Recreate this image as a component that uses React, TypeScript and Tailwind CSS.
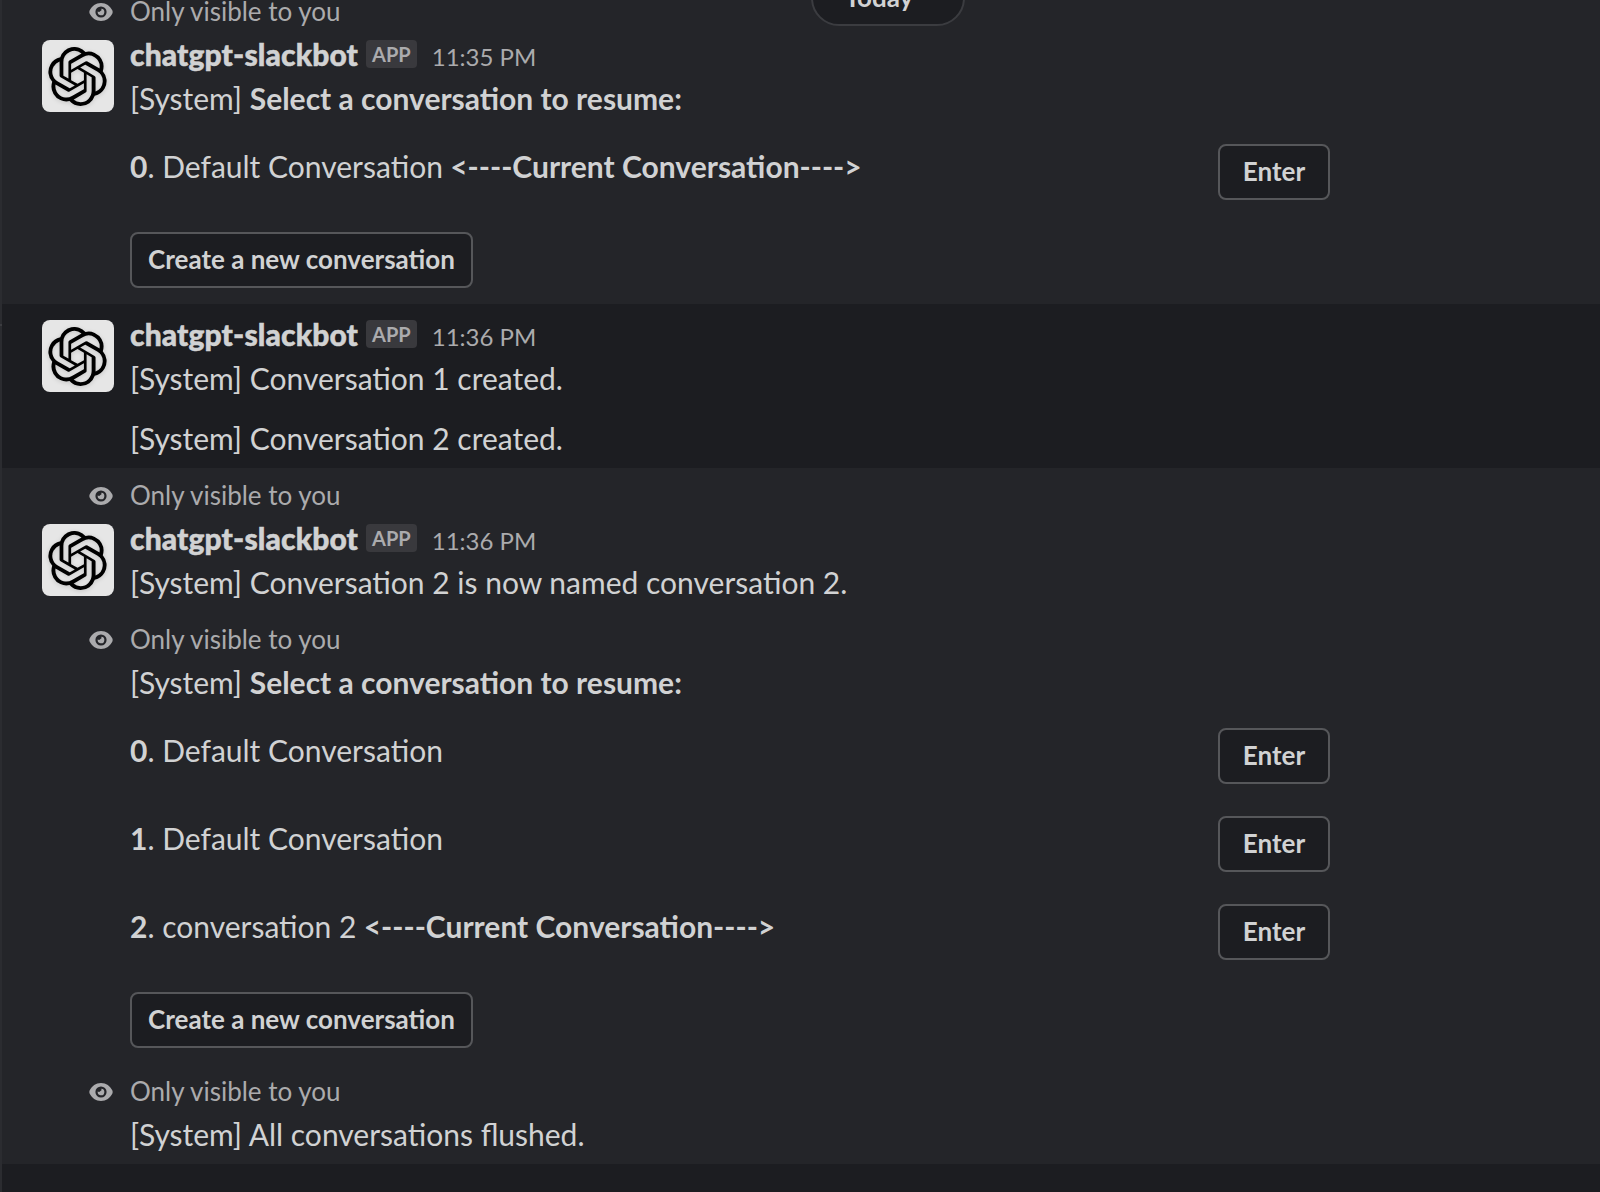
import type { ReactNode } from "react";
import { SiOpenai } from "react-icons/si";

function EyeIcon() {
  return (
    <svg viewBox="0 0 24 20" className="h-5 w-6" aria-hidden="true">
      <path
        fill="#ababad"
        fillRule="evenodd"
        d="M12 .9C17.200 .9 21.200 4 23.400 8.400Q24 10 23.400 11.600C21.200 16 17.200 19.100 12 19.100S2.800 16 .6 11.600Q0 10 .6 8.400C2.800 4 6.800 .9 12 .9ZM12 4.400a5.600 5.600 0 1 0 0 11.200a5.600 5.600 0 0 0 0-11.200Z"
      />
      <path fill="#ababad" d="M12.300 6.700A3.300 3.300 0 1 1 8.800 9.300A1.500 1.500 0 0 0 11.400 9.100A1.700 1.700 0 0 0 12.300 6.700Z" />
    </svg>
  );
}

function OnlyVisible() {
  return (
    <div className="flex h-10 items-center text-[26px] leading-10 text-[#ababad]">
      <div className="flex w-[88px] justify-end pr-[17px]">
        <EyeIcon />
      </div>
      <span className="pb-0.5">Only visible to you</span>
    </div>
  );
}

function Avatar() {
  return (
    <div className="flex size-[72px] shrink-0 items-center justify-center rounded-lg bg-[#e6e6e6] pr-0.5">
      <SiOpenai className="size-[59px] text-black drop-shadow-sm" />
    </div>
  );
}

function Header({ time }: { time: string }) {
  return (
    <div className="flex h-11 items-center">
      <span className="font-black leading-[44px] tracking-[0.13px] [-webkit-text-stroke:0.5px_#d1d2d3]">
        chatgpt-slackbot
      </span>
      <span className="-mt-[1px] ml-2 flex h-7 items-center rounded-[4px] bg-[#39393d] px-[6px] text-[20px] font-bold text-[#ababad]">
        APP
      </span>
      <span className="ml-[15px] pt-[5px] text-[24px] text-[#ababad]">{time}</span>
    </div>
  );
}

type MessageProps = { time?: string; isPrivate?: boolean; dark?: boolean; blocks?: boolean; children: ReactNode };

function Message({ time, isPrivate, dark, blocks, children }: MessageProps) {
  return (
    <div className={`px-10 pt-2 ${blocks ? "pb-4" : "pb-2"} ${dark ? "bg-[#1c1d21]" : "bg-[#242529]"}`}>
      {isPrivate && <OnlyVisible />}
      <div className="flex">
        <div className="w-[88px] shrink-0 pt-2">{time && <Avatar />}</div>
        <div className="min-w-0 flex-1">
          {time && <Header time={time} />}
          {children}
        </div>
      </div>
    </div>
  );
}

function Button({ className, children }: { className: string; children: ReactNode }) {
  return (
    <button
      className={`flex h-14 items-center justify-center rounded-lg border-2 border-[#56575a] bg-[#1c1d21] pb-0.5 text-[26px] font-bold ${className}`}
    >
      {children}
    </button>
  );
}

function Picker({ items }: { items: { name: string; current?: boolean }[] }) {
  return (
    <>
      <p>
        [System] <b className="font-bold">Select a conversation to resume:</b>
      </p>
      <div className="flex flex-col gap-8 pt-6">
        {items.map((item, i) => (
          <div key={i} className="flex w-[1200px] justify-between">
            <p>
              <b className="font-bold">{i}</b>. {item.name}
              {item.current && <b className="font-bold"> &lt;----Current Conversation----&gt;</b>}
            </p>
            <Button className="w-28">Enter</Button>
          </div>
        ))}
        <Button className="w-[343px]">Create a new conversation</Button>
      </div>
    </>
  );
}

export default function App() {
  return (
    <div className="relative flex h-[1192px] w-[1600px] overflow-hidden bg-[#1c1d21] font-['Lato',sans-serif] text-[30px] leading-[44px] text-[#d1d2d3]">
      <div className="w-[2px] shrink-0 bg-[#2b2c30] pt-[324px]">
        <div className="h-0.5 bg-[#3b3c40]" />
      </div>
      <main className="-mt-4 flex-1">
        <Message time="11:35 PM" isPrivate blocks>
          <Picker items={[{ name: "Default Conversation", current: true }]} />
        </Message>
        <Message time="11:36 PM" dark>
          <p>[System] Conversation 1 created.</p>
        </Message>
        <Message dark>
          <p>[System] Conversation 2 created.</p>
        </Message>
        <Message time="11:36 PM" isPrivate>
          <p>[System] Conversation 2 is now named conversation 2.</p>
        </Message>
        <Message isPrivate blocks>
          <Picker
            items={[
              { name: "Default Conversation" },
              { name: "Default Conversation" },
              { name: "conversation 2", current: true },
            ]}
          />
        </Message>
        <Message isPrivate>
          <p>[System] All conversations flushed.</p>
        </Message>
      </main>
      <div className="absolute -top-[30px] left-[811px] flex h-14 w-[154px] items-center justify-center rounded-full border-2 border-[#3b3c40] bg-[#1c1d21] pr-[18px] pb-0.5 text-[26px] font-bold">
        Today
      </div>
    </div>
  );
}
